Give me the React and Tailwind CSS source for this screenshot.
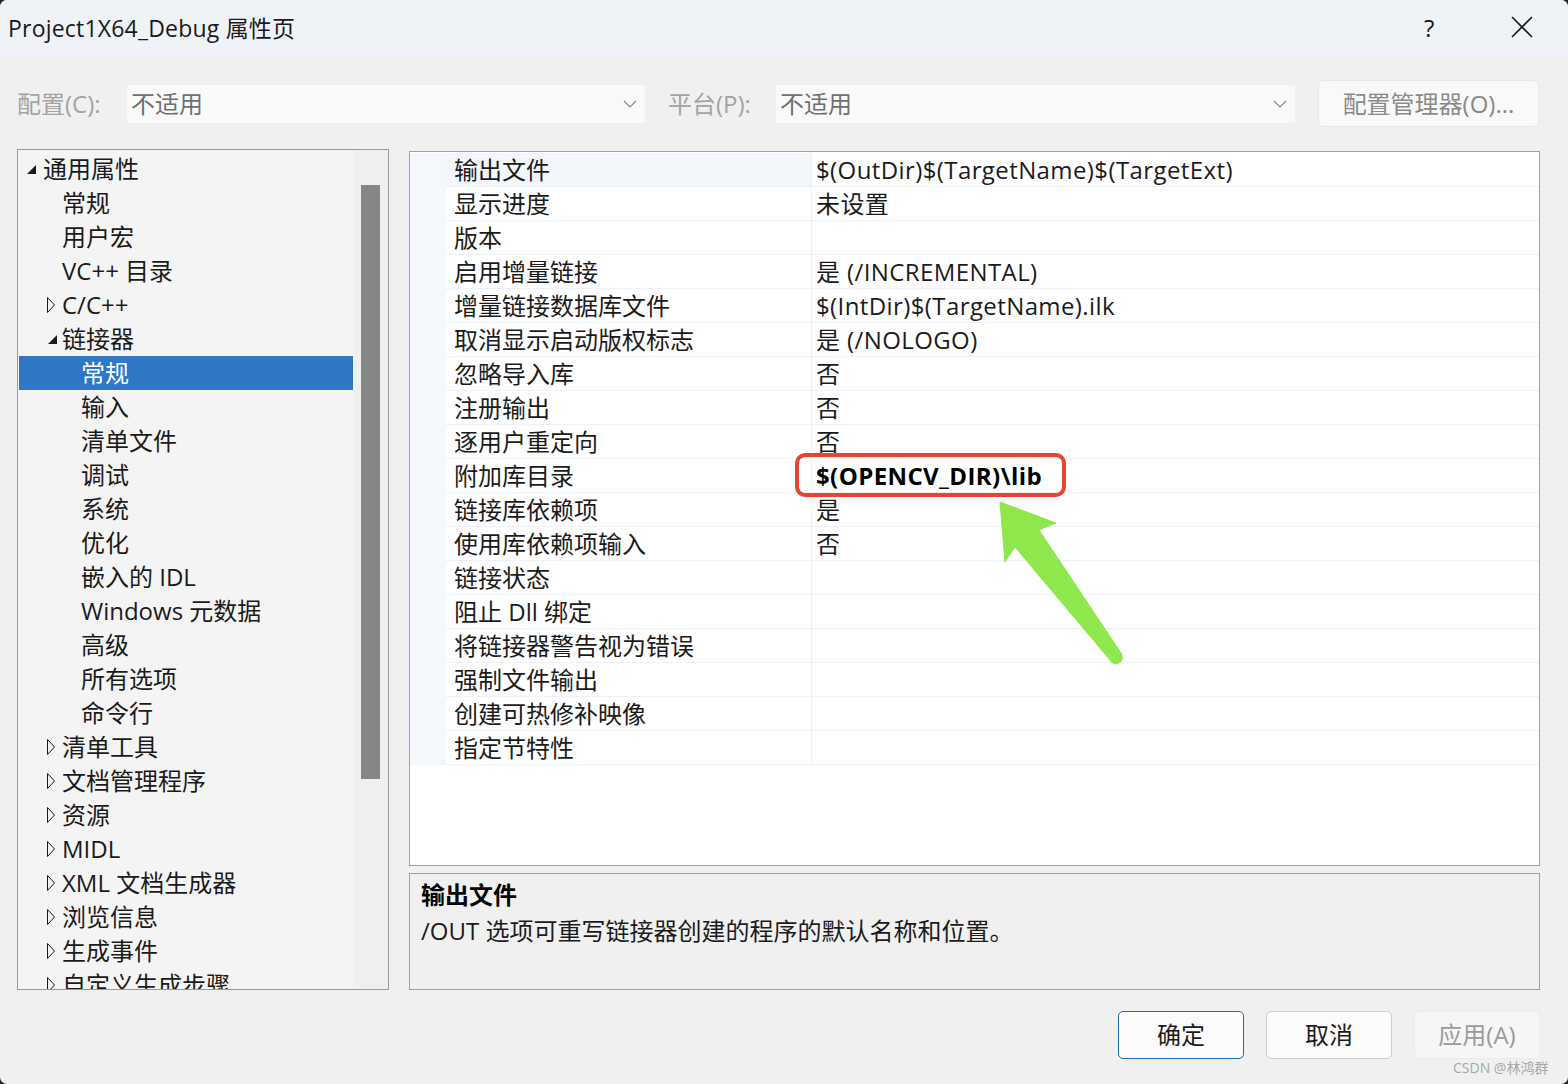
import React from "react";

const FONT = { fontFamily: '"Open Sans", "Noto Sans CJK SC", sans-serif' };

function Filled() {
  return (
    <svg width="14" height="14" viewBox="0 0 14 14" className="shrink-0">
      <polygon points="12,3 12,12 3,12" fill="#1a1a1a" />
    </svg>
  );
}
function Hollow() {
  return (
    <svg width="12" height="18" viewBox="0 0 12 18" className="shrink-0">
      <polygon points="2.5,1.5 9.5,9 2.5,16.5" fill="none" stroke="#1a1a1a" strokeWidth="1" />
    </svg>
  );
}
function Chevron() {
  return (
    <svg width="14" height="8" viewBox="0 0 14 8">
      <polyline points="1,1 7,7 13,1" fill="none" stroke="#8a8a8a" strokeWidth="1.2" />
    </svg>
  );
}

const tree = [
  { t: "通用属性", lvl: 0, ic: "filled" },
  { t: "常规", lvl: 1 },
  { t: "用户宏", lvl: 1 },
  { t: "VC++ 目录", lvl: 1 },
  { t: "C/C++", lvl: 1, ic: "hollow" },
  { t: "链接器", lvl: 1, ic: "filled" },
  { t: "常规", lvl: 2, sel: true },
  { t: "输入", lvl: 2 },
  { t: "清单文件", lvl: 2 },
  { t: "调试", lvl: 2 },
  { t: "系统", lvl: 2 },
  { t: "优化", lvl: 2 },
  { t: "嵌入的 IDL", lvl: 2 },
  { t: "Windows 元数据", lvl: 2 },
  { t: "高级", lvl: 2 },
  { t: "所有选项", lvl: 2 },
  { t: "命令行", lvl: 2 },
  { t: "清单工具", lvl: 1, ic: "hollow" },
  { t: "文档管理程序", lvl: 1, ic: "hollow" },
  { t: "资源", lvl: 1, ic: "hollow" },
  { t: "MIDL", lvl: 1, ic: "hollow" },
  { t: "XML 文档生成器", lvl: 1, ic: "hollow" },
  { t: "浏览信息", lvl: 1, ic: "hollow" },
  { t: "生成事件", lvl: 1, ic: "hollow" },
  { t: "自定义生成步骤", lvl: 1, ic: "hollow" },
];

const props = [
  ["输出文件", "$(OutDir)$(TargetName)$(TargetExt)"],
  ["显示进度", "未设置"],
  ["版本", ""],
  ["启用增量链接", "是 (/INCREMENTAL)"],
  ["增量链接数据库文件", "$(IntDir)$(TargetName).ilk"],
  ["取消显示启动版权标志", "是 (/NOLOGO)"],
  ["忽略导入库", "否"],
  ["注册输出", "否"],
  ["逐用户重定向", "否"],
  ["附加库目录", "$(OPENCV_DIR)\\lib", true],
  ["链接库依赖项", "是"],
  ["使用库依赖项输入", "否"],
  ["链接状态", ""],
  ["阻止 Dll 绑定", ""],
  ["将链接器警告视为错误", ""],
  ["强制文件输出", ""],
  ["创建可热修补映像", ""],
  ["指定节特性", ""],
];

function TreeRow({ item }) {
  let pad;
  if (item.lvl === 0) pad = "pl-[5px]";
  else if (item.lvl === 1) pad = item.ic ? "pl-[26px]" : "pl-[43px]";
  else pad = "pl-[62px]";
  return (
    <div
      className={
        "h-[34px] shrink-0 flex items-center whitespace-nowrap " +
        pad +
        (item.sel ? " bg-[#2f78c6] text-white" : " text-[#1b1b1b]")
      }
    >
      {item.ic === "filled" && (
        <span className={(item.lvl === 0 ? "w-[19px]" : "w-[17px]") + " flex items-center"}>
          <Filled />
        </span>
      )}
      {item.ic === "hollow" && (
        <span className="w-[17px] flex items-center">
          <Hollow />
        </span>
      )}
      <span>{item.t}</span>
    </div>
  );
}

export default function App() {
  return (
    <div className="w-[1568px] h-[1084px] bg-[#1e2420] overflow-hidden" style={FONT}>
      <div className="relative w-[1568px] h-[1084px] bg-[#f0f0f0] rounded-[7px] overflow-hidden flex flex-col text-[24px] text-[#1b1b1b]">
        {/* Title bar */}
        <div className="h-[56px] shrink-0 bg-[#eff3f8] flex items-center pl-[8px] relative">
          <span className="text-[23px] text-[#1a1a1a] tracking-[0.2px]">Project1X64_Debug 属性页</span>
          <span className="absolute left-[1424px] top-[10px] text-[24px] text-[#1a1a1a]">?</span>
          <svg className="absolute left-[1511px] top-[16px]" width="22" height="22" viewBox="0 0 22 22">
            <path d="M1 1 L21 21 M21 1 L1 21" stroke="#1a1a1a" strokeWidth="1.6" />
          </svg>
        </div>

        {/* Config row */}
        <div className="mt-[24px] h-[47px] shrink-0 flex items-center pl-[17px]">
          <div className="w-[110px] text-[#a3a3a3]">配置(C):</div>
          <div className="w-[518px] h-[38px] bg-[#f9f9f9] flex items-center justify-between pl-[4px] pr-[8px]">
            <span className="text-[#707070]">不适用</span>
            <Chevron />
          </div>
          <div className="w-[23px]" />
          <div className="w-[108px] text-[#a3a3a3]">平台(P):</div>
          <div className="w-[519px] h-[38px] bg-[#f9f9f9] flex items-center justify-between pl-[4px] pr-[8px]">
            <span className="text-[#707070]">不适用</span>
            <Chevron />
          </div>
          <div className="w-[23px]" />
          <div className="w-[221px] h-[47px] bg-[#f9f9f9] border border-[#e8e8e8] rounded-[5px] flex items-center justify-center text-[#8a8a8a]">
            配置管理器(O)...
          </div>
        </div>

        {/* Main */}
        <div className="mt-[22px] flex pl-[17px] gap-[20px]">
          {/* Tree */}
          <div className="w-[372px] h-[841px] border border-[#9a9a9a] bg-[#f4f4f4] flex overflow-hidden">
            <div className="w-[335px] pt-[2px] pl-[1px] flex flex-col overflow-hidden">
              {tree.map((it, i) => (
                <TreeRow key={i} item={it} />
              ))}
            </div>
            <div className="flex-1 bg-[#efefef] pt-[35px] pl-[8px]">
              <div className="w-[19px] h-[594px] bg-[#868686]" />
            </div>
          </div>

          {/* Right column */}
          <div className="w-[1131px] flex flex-col">
            <div className="mt-[2px] h-[715px] border border-[#a0a0a0] bg-white pt-[1px] flex flex-col">
              {props.map(([n, v, b], i) => (
                <div key={i} className="h-[34px] shrink-0 flex">
                  <div className="w-[36px] bg-[#f4f7fb]" />
                  <div
                    className={
                      "w-[366px] border-b border-r border-[#eef1f7] pl-[8px] flex items-center whitespace-nowrap " +
                      (i === 0 ? "bg-[#f3f6fb]" : "")
                    }
                  >
                    {n}
                  </div>
                  <div
                    className={
                      "flex-1 border-b border-[#eef1f7] pl-[4px] flex items-center whitespace-nowrap tracking-[0.4px] " +
                      (b ? "font-bold text-black" : "")
                    }
                  >
                    {v}
                  </div>
                </div>
              ))}
            </div>
            <div className="mt-[7px] h-[117px] border border-[#a0a0a0] bg-[#f0f0f0] pt-[3px] pl-[11px] leading-[36px]">
              <div className="font-bold text-black">输出文件</div>
              <div>/OUT 选项可重写链接器创建的程序的默认名称和位置。</div>
            </div>
          </div>
        </div>

        {/* Buttons */}
        <div className="mt-[21px] flex justify-end gap-[22px] pr-[28px]">
          <div className="w-[126px] h-[48px] rounded-[5px] border border-[#1a6cc8] bg-[#fbfbfb] flex items-center justify-center">
            确定
          </div>
          <div className="w-[126px] h-[48px] rounded-[5px] border border-[#cccccc] bg-[#fbfbfb] flex items-center justify-center">
            取消
          </div>
          <div className="w-[126px] h-[48px] rounded-[5px] border border-[#ebebeb] bg-[#f6f6f6] flex items-center justify-center text-[#9a9a9a]">
            应用(A)
          </div>
        </div>

        {/* Watermark */}
        <div className="absolute left-[1453px] top-[1057px] text-[14px] text-[#a8a8a8] whitespace-nowrap">
          CSDN @林鸿群
        </div>

        {/* Red highlight box */}
        <div className="absolute left-[795px] top-[453px] w-[271px] h-[44px] border-[4px] border-[#ea4430] rounded-[10px]" />

        {/* Green arrow */}
        <svg className="absolute left-0 top-0 pointer-events-none" width="1568" height="1084" viewBox="0 0 1568 1084">
          <path
            d="M1000,502 L1056,523 L1039,530 L1121,653 Q1125,662 1116,664 Q1112,664 1110,660 L1015,547 L1005,562 Z"
            fill="#8ee84b"
            stroke="#8ee84b"
            strokeWidth="1"
            strokeLinejoin="round"
          />
        </svg>
      </div>
    </div>
  );
}
